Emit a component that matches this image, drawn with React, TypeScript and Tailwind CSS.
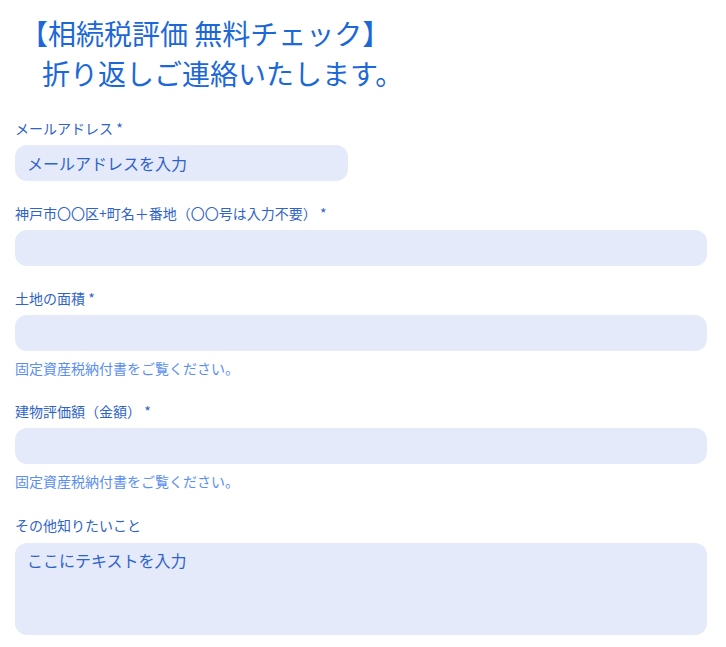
const font = { fontFamily: '"Noto Sans CJK JP", "Noto Sans", sans-serif' };

function Field({
  label,
  required,
  placeholder,
  help,
  narrow,
}: {
  label: string;
  required?: boolean;
  placeholder?: string;
  help?: string;
  narrow?: boolean;
}) {
  return (
    <div className="flex flex-col">
      <label className="text-[14px] leading-[20px] text-[#2f63c8]">
        {label}
        {required && " *"}
      </label>
      <input
        type="text"
        placeholder={placeholder}
        className={`mt-[7px] h-[36px] rounded-xl bg-[#e4eafa] px-[12px] text-[16px] text-[#2f63c8] outline-none placeholder:text-[#2f63c8] ${
          narrow ? "w-[333px]" : "w-full"
        }`}
      />
      {help && (
        <p className="mt-[8px] text-[14px] leading-[18px] text-[#5a8ef0]">{help}</p>
      )}
    </div>
  );
}

export default function App() {
  return (
    <div className="min-h-screen bg-white" style={font}>
      {/* Heading */}
      <h1 className="pt-[13px] text-[28px] leading-[40px] font-normal text-[#1c68d6]">
        <span className="block pl-[20px]">【相続税評価 無料チェック】</span>
        <span className="block pl-[42px]">折り返しご連絡いたします。</span>
      </h1>

      {/* Form */}
      <form className="mt-[25px] flex flex-col pl-[15px] pr-[19px]">
        <Field label="メールアドレス" required placeholder="メールアドレスを入力" narrow />
        <div className="mt-[22px]">
          <Field label="神戸市〇〇区+町名＋番地（〇〇号は入力不要） " required />
        </div>
        <div className="mt-[22px]">
          <Field label="土地の面積" required help="固定資産税納付書をご覧ください。" />
        </div>
        <div className="mt-[24px]">
          <Field label="建物評価額（金額） " required help="固定資産税納付書をご覧ください。" />
        </div>
        <div className="mt-[25px] flex flex-col">
          <label className="text-[14px] leading-[20px] text-[#2f63c8]">その他知りたいこと</label>
          <textarea
            placeholder="ここにテキストを入力"
            className="mt-[8px] h-[92px] w-full resize-none rounded-xl bg-[#e4eafa] px-[12px] py-[5px] text-[16px] leading-[24px] text-[#2f63c8] outline-none placeholder:text-[#2f63c8]"
          />
        </div>
      </form>
    </div>
  );
}
